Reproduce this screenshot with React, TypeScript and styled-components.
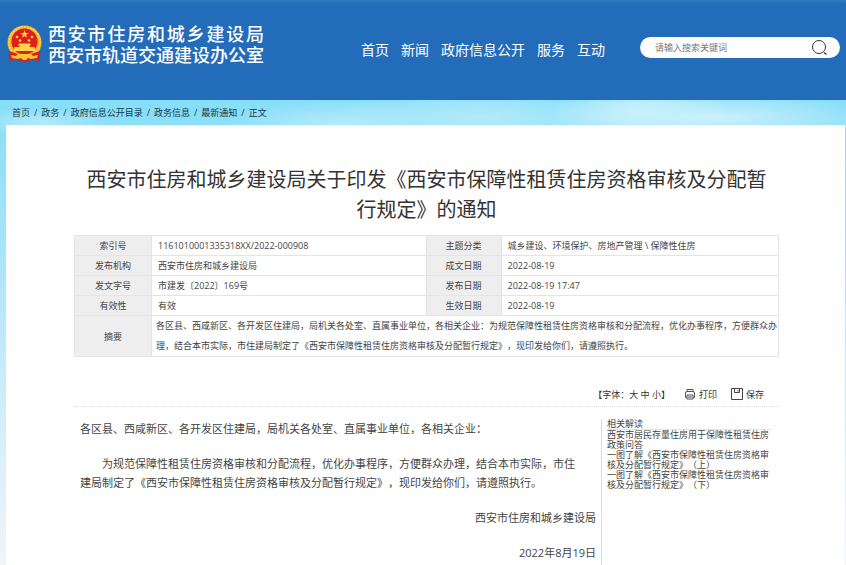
import React from "react";
import styled, { createGlobalStyle } from "styled-components";

const GlobalStyle = createGlobalStyle`
  * { box-sizing: border-box; }
  html { text-spacing-trim: space-all; }
  body {
    margin: 0;
    font-family: "Open Sans", "Noto Sans CJK SC", sans-serif;
    font-size: 9px;
    color: #444;
  }
  a { color: inherit; text-decoration: none; }
  button, input {
    font: inherit;
    color: inherit;
    border: 0;
    padding: 0;
    margin: 0;
    background: none;
  }
  button { cursor: pointer; }
`;

const Page = styled.div`
  min-height: 100vh;
  display: flex;
  flex-direction: column;
  background:
    radial-gradient(ellipse 90px 30px at 640px 112px, #c9f1fd, transparent),
    radial-gradient(ellipse 170px 26px at 710px 118px, #cdf1fd, transparent),
    radial-gradient(ellipse 160px 30px at 480px 118px, #b4ebfb, transparent),
    radial-gradient(ellipse 120px 24px at 340px 124px, #b4ebfb, transparent),
    radial-gradient(ellipse 70px 14px at 40px 122px, #b2eafb, transparent),
    linear-gradient(#86def8 100px, #a5e4f8 240px, #d3eefa 420px, #eff4f8 560px);
`;

const Header = styled.header`
  display: flex;
  align-items: flex-start;
  height: 100px;
  padding: 0 6px;
  background: linear-gradient(#3479c0, #226cb9 4px);
  color: #fff;
`;

const Brand = styled.a`
  display: flex;
  gap: 5px;
  padding-top: 24px;
`;

const BrandText = styled.div`
  width: 216px;
  font-size: 18px;
  line-height: 21px;
  font-weight: 500;
  text-align-last: justify;
`;

const Nav = styled.nav`
  display: flex;
  gap: 12px;
  margin-left: 97px;
  padding-top: 40px;
  font-size: 14px;
  line-height: 20px;
  white-space: nowrap;
`;

const Search = styled.form`
  display: flex;
  align-items: center;
  width: 200px;
  height: 21px;
  margin: 37px 0 0 auto;
  padding: 0 12px 0 15px;
  border-radius: 11px;
  background: #fff;
  color: #444;
  input {
    flex: 1;
    min-width: 0;
    outline: 0;
  }
  input::placeholder { color: #777; opacity: 1; }
  button, svg { display: block; }
`;

const Crumbs = styled.nav`
  display: flex;
  align-items: center;
  gap: 4px;
  height: 25px;
  padding: 0 12px;
  line-height: 12px;
  color: #173845;
  white-space: nowrap;
`;

const Panel = styled.main`
  flex: 1;
  margin: 0 1px 0 6px;
  padding: 40px 66px 0 68px;
  background: #fff;
`;

const Title = styled.h1`
  margin: 0 0 10px;
  padding: 0 8px;
  font-size: 20px;
  line-height: 30px;
  font-weight: 400;
  text-align: center;
  color: #333;
`;

const Info = styled.table`
  width: 100%;
  table-layout: fixed;
  border-collapse: collapse;
  line-height: 19px;
  th, td { border: 1px solid #e4e4e4; padding: 0 0 0 6px; }
  th { padding: 0; font-weight: 400; background: #eee; }
  td { text-align: left; }
`;

const Col = styled.col<{ $w?: string }>`
  width: ${(p) => p.$w ?? "auto"};
`;

const Summary = styled.td`
  && { padding-left: 4px; line-height: 20px; }
`;

const Tools = styled.div`
  display: flex;
  justify-content: flex-end;
  align-items: center;
  gap: 14px;
  height: 25px;
  margin-top: 25px;
  padding-right: 15px;
  border-bottom: 1px dotted #ddd;
  color: #333;
`;

const FontSizes = styled.div`
  white-space: pre;
`;

const Tool = styled.button`
  display: flex;
  align-items: center;
  gap: 3px;
`;

const Columns = styled.div`
  display: flex;
  min-height: 148px;
  padding-top: 12px;
`;

const Article = styled.article`
  flex: 1;
  padding: 0 5px 0 6px;
  font-size: 11px;
  line-height: 19px;
  p { margin: 0 0 16px; max-width: 500px; }
`;

const Indented = styled.p`
  text-indent: 2em;
`;

const Sign = styled.div`
  margin-bottom: 16px;
  text-align: right;
`;

const Aside = styled.aside`
  width: 178px;
  padding: 0 7px 0 5px;
  border-left: 1px solid #ddd;
  line-height: 10px;
  h2 {
    margin: 0;
    font-size: 9px;
    font-weight: 400;
    border-bottom: 1px solid #e4e4e4;
  }
  a { display: block; }
`;

const Emblem = () => (
  <svg width="37" height="40" viewBox="0 0 37 40" aria-hidden="true">
    <path d="M4 27 L3 36 Q11 34 18.500 38 Q26 34 34 36 L33 27Z" fill="#e0231b" />
    <circle cx="18.500" cy="18.500" r="17" fill="#f3b52c" />
    <circle cx="18.500" cy="18.500" r="15.500" fill="none" stroke="#fbd75c" strokeWidth="1.500" strokeDasharray="2 1" />
    <circle cx="18.500" cy="17.500" r="13" fill="#df1f19" />
    <path d="M18.500 6l1 3h3l-2.400 1.800.9 2.900-2.500-1.800-2.500 1.800.9-2.900-2.400-1.800h3z" fill="#ffdc4d" />
    <g fill="#ffd64a">
      <circle cx="11" cy="13" r="1.300" />
      <circle cx="14" cy="16.500" r="1.300" />
      <circle cx="23" cy="16.500" r="1.300" />
      <circle cx="26" cy="13" r="1.300" />
      <path d="M13 19.500h11l1 2h-1.500v1.500h5l1 4h-22l1-4h5v-1.500H12z" />
    </g>
    <path d="M3 27Q18.500 34 34 27L34 37Q27 35 22 37H15Q10 35 3 37Z" fill="#df1f19" />
    <path d="M12 30h13l2 2 5-1-1 3-6 1-3-1-2 2h-3l-2-2-3 1-6-1-1-3 5 1z" fill="#f9c73c" />
  </svg>
);

const SearchIcon = () => (
  <svg width="17" height="17" viewBox="0 0 17 17" fill="none" stroke="#333">
    <circle cx="8" cy="8" r="6.500" />
    <path d="M13 13.500l2.500 2" strokeWidth="1.500" />
  </svg>
);

const PrintIcon = () => (
  <svg width="12" height="12" viewBox="0 0 12 12" fill="none" stroke="#555">
    <path d="M3 3.500V1.500h6v2M3 9.500H1.500V5q0-1.500 1.500-1.500h6q1.500 0 1.500 1.500v4.500H9M3 7h6v4H3zM4 9h4" />
  </svg>
);

const SaveIcon = () => (
  <svg width="12" height="12" viewBox="0 0 12 12" fill="none" stroke="#444">
    <path d="M.5.5h11v11H.5zM3.500.5v4h5v-4M7 2v1.500" />
  </svg>
);

const navItems = ["首页", "新闻", "政府信息公开", "服务", "互动"];
const crumbs = ["首页", "政务", "政府信息公开目录", "政务信息", "最新通知"];
const rows = [
  ["索引号", "1161010001335318XX/2022-000908", "主题分类", "城乡建设、环境保护、房地产管理 \\ 保障性住房"],
  ["发布机构", "西安市住房和城乡建设局", "成文日期", "2022-08-19"],
  ["发文字号", "市建发〔2022〕169号", "发布日期", "2022-08-19 17:47"],
  ["有效性", "有效", "生效日期", "2022-08-19"],
];
const related = [
  "西安市居民存量住房用于保障性租赁住房政策问答",
  "一图了解《西安市保障性租赁住房资格审核及分配暂行规定》（上）",
  "一图了解《西安市保障性租赁住房资格审核及分配暂行规定》（下）",
];

export default function App() {
  return (
    <>
      <GlobalStyle />
      <Page lang="zh-CN">
        <Header>
          <Brand href="#">
            <Emblem />
            <BrandText>
              <div>西安市住房和城乡建设局</div>
              <div>西安市轨道交通建设办公室</div>
            </BrandText>
          </Brand>
          <Nav>
            {navItems.map((n) => (
              <a href="#" key={n}>{n}</a>
            ))}
          </Nav>
          <Search onSubmit={(e) => e.preventDefault()}>
            <input type="text" aria-label="搜索" placeholder="请输入搜索关键词" />
            <button type="submit" aria-label="搜索"><SearchIcon /></button>
          </Search>
        </Header>
        <Crumbs aria-label="位置">
          {crumbs.map((c) => (
            <React.Fragment key={c}>
              <a href="#">{c}</a>
              <span>/</span>
            </React.Fragment>
          ))}
          <span>正文</span>
        </Crumbs>
        <Panel>
          <Title>西安市住房和城乡建设局关于印发《西安市保障性租赁住房资格审核及分配暂行规定》的通知</Title>
          <Info>
            <colgroup>
              <Col $w="77px" />
              <Col $w="39%" />
              <Col $w="75px" />
              <Col />
            </colgroup>
            <tbody>
              {rows.map((r) => (
                <tr key={r[0]}>
                  <th scope="row">{r[0]}</th>
                  <td>{r[1]}</td>
                  <th scope="row">{r[2]}</th>
                  <td>{r[3]}</td>
                </tr>
              ))}
              <tr>
                <th scope="row">摘要</th>
                <Summary colSpan={3}>
                  各区县、西咸新区、各开发区住建局，局机关各处室、直属事业单位，各相关企业：为规范保障性租赁住房资格审核和分配流程，优化办事程序，方便群众办理，结合本市实际，市住建局制定了《西安市保障性租赁住房资格审核及分配暂行规定》，现印发给你们，请遵照执行。
                </Summary>
              </tr>
            </tbody>
          </Info>
          <Tools>
            <FontSizes>
              【字体：<button type="button">大</button> <button type="button">中</button> <button type="button">小</button>】
            </FontSizes>
            <Tool type="button"><PrintIcon />打印</Tool>
            <Tool type="button"><SaveIcon />保存</Tool>
          </Tools>
          <Columns>
            <Article>
              <p>各区县、西咸新区、各开发区住建局，局机关各处室、直属事业单位，各相关企业：</p>
              <Indented>
                为规范保障性租赁住房资格审核和分配流程，优化办事程序，方便群众办理，结合本市实际，市住建局制定了《西安市保障性租赁住房资格审核及分配暂行规定》，现印发给你们，请遵照执行。
              </Indented>
              <Sign>西安市住房和城乡建设局</Sign>
              <Sign>2022年8月19日</Sign>
            </Article>
            <Aside>
              <h2>相关解读</h2>
              {related.map((r) => (
                <a href="#" key={r}>{r}</a>
              ))}
            </Aside>
          </Columns>
        </Panel>
      </Page>
    </>
  );
}
